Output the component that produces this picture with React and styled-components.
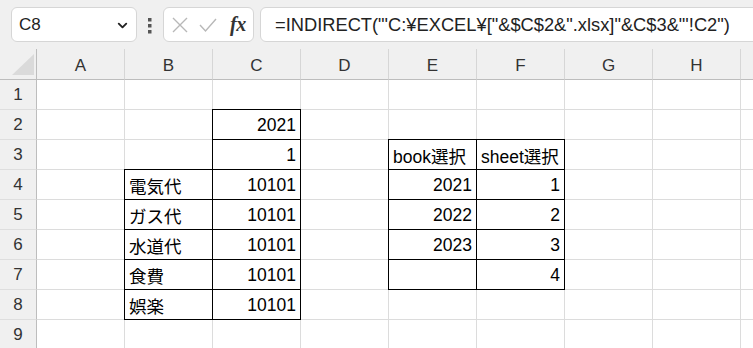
import React from 'react'
import styled, { createGlobalStyle } from 'styled-components'
import { ChevronDown } from 'lucide-react'

const GlobalStyle = createGlobalStyle`
  html, body {
    margin: 0;
    padding: 0;
    background: #f0f0f0;
    font-family: "Liberation Sans", "Noto Sans CJK JP", sans-serif;
    overflow: hidden;
  }
`

// the last column only peeks in at the right edge, so its letter is not shown
const cols = ['A', 'B', 'C', 'D', 'E', 'F', 'G', 'H', '']

// each row: map of column -> { v, align, box }
const sheet = [
  {},
  { C: { v: '2021', align: 'right', box: true } },
  {
    C: { v: '1', align: 'right', box: true },
    E: { v: 'book選択', box: true },
    F: { v: 'sheet選択', box: true },
  },
  {
    B: { v: '電気代', box: true },
    C: { v: '10101', align: 'right', box: true },
    E: { v: '2021', align: 'right', box: true },
    F: { v: '1', align: 'right', box: true },
  },
  {
    B: { v: 'ガス代', box: true },
    C: { v: '10101', align: 'right', box: true },
    E: { v: '2022', align: 'right', box: true },
    F: { v: '2', align: 'right', box: true },
  },
  {
    B: { v: '水道代', box: true },
    C: { v: '10101', align: 'right', box: true },
    E: { v: '2023', align: 'right', box: true },
    F: { v: '3', align: 'right', box: true },
  },
  {
    B: { v: '食費', box: true },
    C: { v: '10101', align: 'right', box: true },
    E: { v: '', box: true },
    F: { v: '4', align: 'right', box: true },
  },
  {
    B: { v: '娯楽', box: true },
    C: { v: '10101', align: 'right', box: true },
  },
  {},
]

const App = () => {
  return (
    <Page>
      <GlobalStyle />
      <Toolbar>
        <NameBox>
          <span>C8</span>
          <ChevronDown size={15} strokeWidth={3} color="#222" />
        </NameBox>
        <Dots width="4" height="16" viewBox="0 0 4 16">
          <rect x="0" y="0" width="3.5" height="3.5" fill="#555" />
          <rect x="0" y="6" width="3.5" height="3.5" fill="#555" />
          <rect x="0" y="12" width="3.5" height="3.5" fill="#555" />
        </Dots>
        <FxBox>
          <svg width="18" height="18" viewBox="0 0 18 18">
            <path d="M2 2 L16 16 M16 2 L2 16" stroke="#b8b8b8" strokeWidth="1.4" fill="none" />
          </svg>
          <svg width="20" height="18" viewBox="0 0 20 18">
            <path d="M2 9 L7.5 15 L18 3" stroke="#b8b8b8" strokeWidth="1.4" fill="none" />
          </svg>
          <Fx>fx</Fx>
        </FxBox>
        <FormulaBox>=INDIRECT("'C:¥EXCEL¥["&$C$2&".xlsx]"&C$3&"'!C2")</FormulaBox>
      </Toolbar>
      <Grid>
        <Corner>
          <Triangle />
        </Corner>
        {cols.map((c, i) => (
          <ColHead key={i}>{c}</ColHead>
        ))}
        {sheet.map((row, i) => (
          <React.Fragment key={i}>
            <RowHead>{i + 1}</RowHead>
            {cols.map((c, j) => {
              const cell = row[c]
              return (
                <Cell key={j} align={cell?.align} box={cell?.box ? 1 : 0}>
                  {cell?.v}
                </Cell>
              )
            })}
          </React.Fragment>
        ))}
      </Grid>
    </Page>
  )
}

export default App

const Page = styled.div`
  width: 753px;
  height: 348px;
  overflow: hidden;
  background: #f0f0f0;
`

const Toolbar = styled.div`
  height: 49px;
  box-sizing: border-box;
  padding: 7px 0 0 11px;
  display: flex;
  align-items: flex-start;
`

const NameBox = styled.div`
  width: 126px;
  height: 35px;
  box-sizing: border-box;
  background: #fff;
  border: 1px solid #d6d6d6;
  border-radius: 6px;
  display: flex;
  align-items: center;
  justify-content: space-between;
  padding: 1px 6px 0 7px;
  font-size: 17px;
  color: #222;
`

const Dots = styled.svg`
  margin: 11px 11px 0 11px;
`

const FxBox = styled.div`
  width: 91px;
  height: 35px;
  box-sizing: border-box;
  background: #fff;
  border: 1px solid #d6d6d6;
  border-radius: 6px;
  display: flex;
  align-items: center;
  gap: 9px;
  padding: 0 0 0 7px;
`

const Fx = styled.span`
  font-family: "Liberation Serif", "DejaVu Serif", serif;
  font-style: italic;
  font-weight: bold;
  font-size: 20px;
  color: #333;
  margin-left: 3px;
  letter-spacing: -0.5px;
`

const FormulaBox = styled.div`
  flex: 1;
  margin-left: 6px;
  margin-right: -20px;
  height: 35px;
  box-sizing: border-box;
  background: #fff;
  border: 1px solid #d6d6d6;
  border-radius: 6px;
  display: flex;
  align-items: center;
  padding: 1px 0 0 14px;
  font-size: 18.3px;
  color: #222;
  white-space: nowrap;
`

const Grid = styled.div`
  display: grid;
  grid-template-columns: 37px repeat(9, 88px);
  grid-template-rows: 31px;
  grid-auto-rows: 30px;
  background: #fff;
`

const Corner = styled.div`
  background: #f0f0f0;
  border-right: 1px solid #bdbdbd;
  border-bottom: 1px solid #bdbdbd;
  display: flex;
  align-items: flex-end;
  justify-content: flex-end;
  padding: 0 2px 4px 0;
`

const Triangle = styled.div`
  width: 22px;
  height: 21px;
  background: #dadada;
  clip-path: polygon(100% 0, 100% 100%, 0 100%);
`

const ColHead = styled.div`
  background: #f0f0f0;
  border-bottom: 1px solid #bdbdbd;
  border-right: 1px solid #d6d6d6;
  display: flex;
  align-items: center;
  justify-content: center;
  font-size: 17px;
  color: #333;
  padding-top: 3px;
`

const RowHead = styled.div`
  background: #f0f0f0;
  border-right: 1px solid #bdbdbd;
  border-bottom: 1px solid #dedede;
  display: flex;
  align-items: center;
  justify-content: center;
  font-size: 17px;
  color: #333;
`

const Cell = styled.div`
  position: relative;
  background: #fff;
  border-right: 1px solid #dcdcdc;
  border-bottom: 1px solid #dcdcdc;
  display: flex;
  align-items: center;
  justify-content: ${({ align }) => (align === 'right' ? 'flex-end' : 'flex-start')};
  padding: 1px 4px 0 4px;
  font-size: 17.5px;
  color: #000;
  white-space: nowrap;
  ${({ box }) =>
    box
      ? `
    border-right-color: #000;
    border-bottom-color: #000;
    &::after {
      content: '';
      position: absolute;
      top: -1px;
      left: -1px;
      right: -1px;
      bottom: -1px;
      border: 1px solid #000;
      pointer-events: none;
      z-index: 1;
    }
  `
      : ''}
`
